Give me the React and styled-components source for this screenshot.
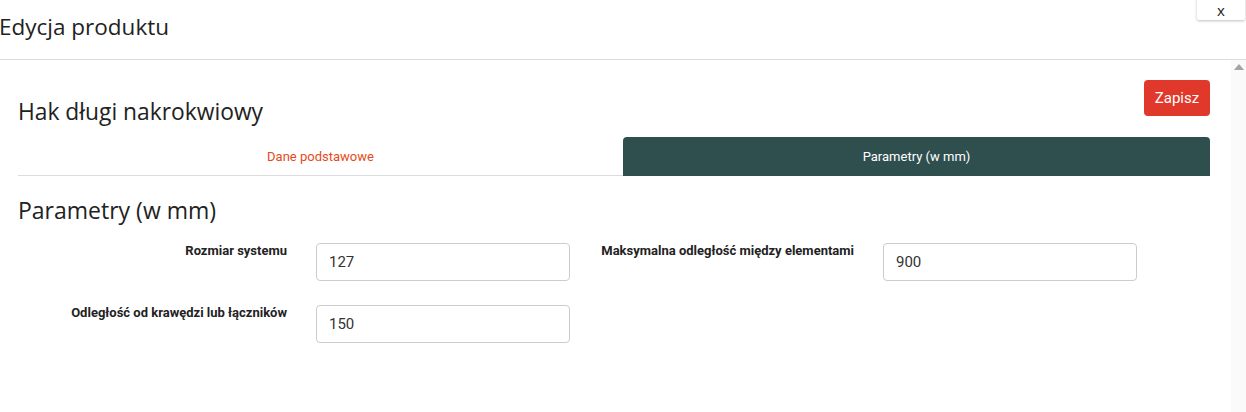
import styled, { createGlobalStyle } from 'styled-components';

const Global = createGlobalStyle`
  html, body { margin: 0; padding: 0; background: #fff; }
  body { width: 1246px; height: 412px; overflow: hidden; }
  * { box-sizing: border-box; }
`;

const Modal = styled.div`
  width: 1246px;
  height: 412px;
  display: flex;
  flex-direction: column;
  background: #fff;
  position: relative;
`;

const Header = styled.div`
  height: 60px;
  flex-shrink: 0;
  border-bottom: 1px solid #dcdcdc;
  padding: 11px 0 0 0;
`;

const ModalTitle = styled.h1`
  margin: 0 0 0 -1px;
  font-family: "Open Sans", "Noto Sans", sans-serif;
  font-weight: 400;
  font-size: 22.5px;
  line-height: 32px;
  color: #222;
`;

const CloseButton = styled.button`
  position: absolute;
  top: -6px;
  right: 1px;
  width: 48px;
  height: 26px;
  padding-top: 6px;
  border: none;
  background: #fff;
  box-shadow: 0 1px 3px rgba(0, 0, 0, 0.25);
  border-radius: 0 0 2px 2px;
  font-family: "Open Sans", sans-serif;
  font-size: 15px;
  line-height: 14px;
  color: #222;
`;

const Body = styled.div`
  flex: 1;
  display: flex;
  min-height: 0;
`;

const Content = styled.div`
  flex: 1;
  padding: 20px 21px 0 18px;
`;

const Scrollbar = styled.div`
  width: 15px;
  background: #fafafa;
  display: flex;
  justify-content: center;
  padding-top: 4px;
`;

const Arrow = styled.div`
  width: 0;
  height: 0;
  border-left: 5px solid transparent;
  border-right: 5px solid transparent;
  border-bottom: 6px solid #a3a3a3;
`;

const TopRow = styled.div`
  display: flex;
  justify-content: space-between;
  align-items: flex-start;
`;

const ProductName = styled.h2`
  margin: 16px 0 0 0;
  font-family: "Open Sans", "Noto Sans", sans-serif;
  font-weight: 400;
  font-size: 22.8px;
  line-height: 32px;
  color: #222;
`;

const SaveButton = styled.button`
  width: 66px;
  height: 36px;
  border: none;
  border-radius: 4px;
  background: #e0392c;
  color: #fff;
  font-family: Roboto, sans-serif;
  font-size: 15px;
`;

const Tabs = styled.div`
  display: grid;
  grid-template-columns: 605px 587px;
  margin-top: 9px;
`;

const Tab = styled.div`
  height: 39px;
  display: flex;
  align-items: center;
  justify-content: center;
  font-family: Roboto, sans-serif;
  font-size: 13px;
  color: ${p => (p.$active ? '#fff' : '#e64a19')};
  background: ${p => (p.$active ? '#2f4f4f' : 'transparent')};
  border-radius: ${p => (p.$active ? '4px 4px 0 0' : '0')};
  border-bottom: ${p => (p.$active ? 'none' : '1px solid #dcdcdc')};
  padding-top: ${p => (p.$active ? '0' : '1px')};
`;

const SectionTitle = styled.h3`
  margin: 18px 0 0 0;
  font-family: "Open Sans", "Noto Sans", sans-serif;
  font-weight: 400;
  font-size: 23px;
  line-height: 32px;
  color: #222;
`;

const FormGrid = styled.div`
  display: grid;
  grid-template-columns: 567px 567px;
  row-gap: 24px;
  margin-top: 17px;
`;

const Field = styled.div`
  display: grid;
  grid-template-columns: 269px 254px;
  column-gap: 29px;
  align-items: start;
`;

const Label = styled.label`
  text-align: right;
  font-family: Roboto, sans-serif;
  font-weight: 700;
  font-size: 13px;
  line-height: 14px;
  color: #222;
  padding-top: 1px;
`;

const Input = styled.input`
  height: 38px;
  width: 254px;
  border: 1px solid #ccc;
  border-radius: 4px;
  padding: 0 12px;
  font-family: Roboto, sans-serif;
  font-size: 15px;
  color: #333;
  outline: none;
`;

const fields = [
  { label: 'Rozmiar systemu', value: '127' },
  { label: 'Maksymalna odległość między elementami', value: '900' },
  { label: 'Odległość od krawędzi lub łączników', value: '150' },
];

export default function App() {
  return (
    <Modal>
      <Global />
      <Header>
        <ModalTitle>Edycja produktu</ModalTitle>
      </Header>
      <CloseButton>x</CloseButton>
      <Body>
        <Content>
          <TopRow>
            <ProductName>Hak długi nakrokwiowy</ProductName>
            <SaveButton>Zapisz</SaveButton>
          </TopRow>
          <Tabs>
            <Tab>Dane podstawowe</Tab>
            <Tab $active>Parametry (w mm)</Tab>
          </Tabs>
          <SectionTitle>Parametry (w mm)</SectionTitle>
          <FormGrid>
            {fields.map((f, i) => (
              <Field key={i}>
                <Label>{f.label}</Label>
                <Input defaultValue={f.value} />
              </Field>
            ))}
          </FormGrid>
        </Content>
        <Scrollbar>
          <Arrow />
        </Scrollbar>
      </Body>
    </Modal>
  );
}
